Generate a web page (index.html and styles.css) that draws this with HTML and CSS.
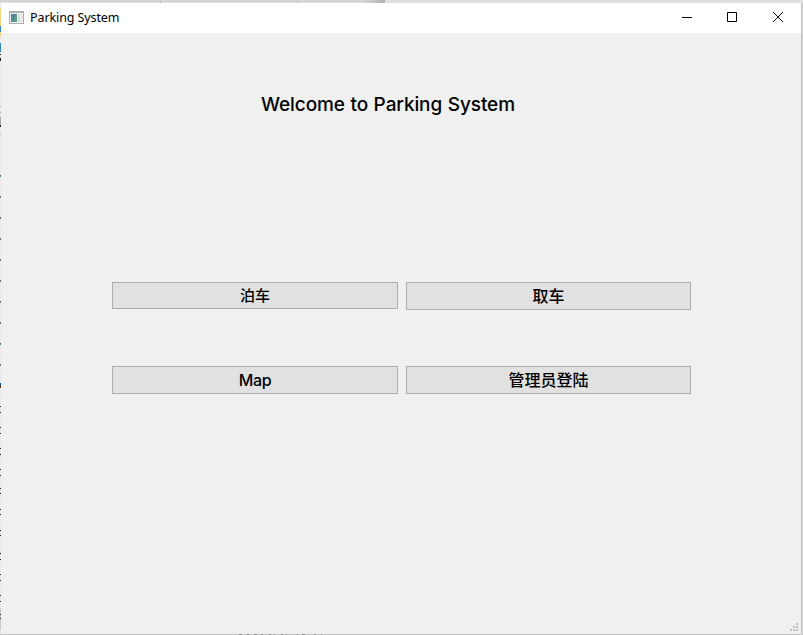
FILE: index.html
```html
<!DOCTYPE html>
<html lang="zh-CN">
<head>
<meta charset="utf-8">
<title>Parking System</title>
<link rel="stylesheet" href="styles.css">
</head>
<body>
<svg class="desktop" width="803" height="635" viewBox="0 0 803 635" shape-rendering="crispEdges" aria-hidden="true">
  <defs><linearGradient id="fade"><stop stop-color="#d4d4d4"/><stop offset="1" stop-color="#b2b2b2"/></linearGradient></defs>
  <path fill="#e0e0e0" d="M0 0h803v635H0z"/>
  <path fill="#d4d4d4" d="M0 0h385v2H0z"/>
  <path fill="url(#fade)" d="M365 0h20v3h-20z"/>
  <path fill="#b8b8b8" d="M160 1h1v2h-1zM297 1h1v2h-1z"/>
  <path fill="#c4c4c4" d="M801 3h1v632h-1zM0 634h803v1H0z"/>
  <path fill="#d4d4d4" d="M802 3h1v632h-1z"/>
  <path fill="#e9e9e9" d="M0 4h1v604H0z"/>
  <path fill="#f3d47a" d="M0 8h1v18H0zM0 32h1v4H0z"/>
  <path fill="#3486c5" d="M0 26h1v6H0zM0 43h1v9H0z"/>
  <path fill="#202020" d="M0 54h1v1H0zM0 58h1v3H0zM0 125h1v2H0z"/>
  <path fill="#aaa" d="M0 106h1v1H0zM0 112h1v1H0zM0 117h1v8H0zM0 134h1v1H0z"/>
  <path fill="#795744" d="M0 175h1v1H0zM0 196h1v1H0zM0 217h1v1H0zM0 238h1v1H0zM0 259h1v1H0zM0 280h1v1H0zM0 301h1v1H0zM0 322h1v1H0zM0 343h1v1H0zM0 364h1v1H0z"/>
  <path fill="#578895" d="M0 176h1v1H0zM0 197h1v1H0zM0 218h1v1H0zM0 239h1v1H0zM0 260h1v1H0zM0 281h1v1H0zM0 302h1v1H0zM0 323h1v1H0zM0 344h1v1H0zM0 365h1v1H0z"/>
  <path fill="#174e94" d="M0 383h1v3H0z"/><path fill="#582a13" d="M0 386h1v2H0z"/>
  <path fill="#222" d="M0 406h1v1H0zM0 412h1v1H0zM0 427h1v1H0zM0 433h1v1H0zM0 448h1v1H0zM0 454h1v1H0zM0 469h1v1H0zM0 475h1v1H0zM0 488h1v1H0zM0 493h1v1H0zM0 509h1v1H0zM0 514h1v1H0zM0 530h1v1H0zM0 535h1v1H0zM0 553h1v1H0zM0 559h1v1H0zM0 574h1v1H0zM0 580h1v1H0zM0 595h1v1H0zM0 601h1v1H0z"/>
  <path fill="#c8c8c8" d="M0 608h1v22H0z"/><path fill="#222" d="M0 614h1v1H0zM0 618h1v1H0z"/>
  <path fill="#888" d="M239 634h3v1h-3zM247 634h2v1h-2zM254 634h3v1h-3zM261 634h2v1h-2zM269 634h2v1h-2zM274 634h1v1h-1zM281 634h2v1h-2zM286 634h1v1h-1zM297 634h1v1h-1zM302 634h3v1h-3zM314 634h2v1h-2zM321 634h1v1h-1z"/>
  <path fill="#b5b5b5" d="M373 633h12v1h-12z"/>
</svg>
<main class="window">
  <header class="titlebar">
    <svg class="app-icon" width="16" height="14" viewBox="0 0 16 14" aria-hidden="true">
      <defs><linearGradient id="pane" x2="1" y2="1"><stop stop-color="#4c75a2"/><stop offset="1" stop-color="#5fac7b"/></linearGradient></defs>
      <path fill="#aeb1b4" d="M0 0h15v13H0z"/><path fill="#f4f4f4" d="M1 2h13v10H1z"/>
      <path fill="url(#pane)" d="M2 3h6v8H2z"/><path fill="#d2dedb" d="M9 3h2v8H9z"/><path fill="#e1e3e4" d="M12 3h2v8h-2z"/>
    </svg>
    <span class="caption">Parking System</span>
    <svg class="controls" width="103" height="12" viewBox="0 0 103 12" fill="none" stroke="#000">
      <path d="M0 5.5h10M45.5.5h9v9h-9zM91 0l10 10M101 0L91 10"/>
    </svg>
  </header>
  <section class="content">
    <h1>Welcome to Parking System</h1>
    <div class="actions">
      <button class="short">泊车</button>
      <button>取车</button>
      <button class="latin">Map</button>
      <button>管理员登陆</button>
    </div>
    <svg class="grip" width="8" height="8" viewBox="0 0 8 8" fill="#bfbfbf" aria-hidden="true"><path d="M6 0h2v2H6zM3 3h2v2H3zM6 3h2v2H6zM0 6h2v2H0zM3 6h2v2H3zM6 6h2v2H6z"/></svg>
  </section>
</main>
</body>
</html>
```
FILE: styles.css
```css
* { box-sizing: border-box; }
body { margin: 0; width: 803px; height: 635px; overflow: hidden; position: relative; padding: 3px 2px 1px 1px; }
.desktop { position: absolute; inset: 0; z-index: -1; }
.window { height: 631px; background: #f0f0f0; display: flex; flex-direction: column; }
.titlebar { height: 30px; background: #fff; display: flex; align-items: center; padding: 0 16px 0 8px; }
.app-icon { margin-right: 5px; }
.caption { font: 12.5px/18px "Noto Sans", sans-serif; letter-spacing: -0.1px; color: #000; white-space: nowrap; }
.controls { margin-left: auto; }
.content { flex: 1; position: relative; padding: 58px 110px 0 111px; }
h1 { margin: 0 0 0 149px; height: 28px; font: 500 19px/28px Inter, sans-serif; letter-spacing: -0.09px; word-spacing: 0.6px; white-space: nowrap; color: #000; }
.actions { margin-top: 163px; display: grid; grid-template-columns: 286px 285px; gap: 56px 8px; }
button { height: 28px; border: 1px solid #adadad; background: #e1e1e1; padding: 0; font: 500 16px/24px Inter, "Noto Sans CJK SC", sans-serif; color: #000; }
.short { height: 27px; font-size: 15px; }
.latin { letter-spacing: -0.3px; }
.grip { position: absolute; right: 3px; bottom: 3px; }
```
